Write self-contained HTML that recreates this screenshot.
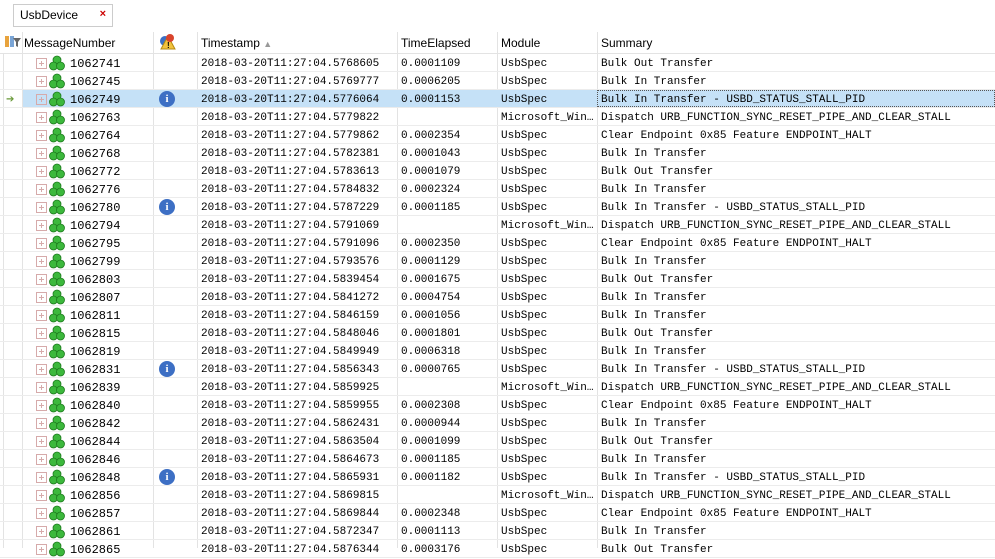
<!DOCTYPE html>
<html><head><meta charset="utf-8"><style>
*{margin:0;padding:0;box-sizing:border-box}
body{width:995px;height:548px;overflow:hidden;background:#fff;position:relative;font-family:"Liberation Sans",sans-serif}
.tab{position:absolute;left:13px;top:4px;width:100px;height:23px;border:1px solid #ccc;font-size:12px;line-height:21px;padding-left:6px;color:#000}
.tab b{position:absolute;right:6px;top:-1px;color:#c00;font-size:11px}
.hdr{position:absolute;top:32px;left:0;width:995px;height:22px;border-bottom:1px solid #e3e3e3;font-size:12px}
.hdr span{position:absolute;top:4px}
.vl{position:absolute;top:32px;bottom:0;width:1px;background:#e3e3e3}
.r{position:absolute;left:0;width:995px;height:18px;border-bottom:1px solid #ececec;font-family:"Liberation Mono",monospace;font-size:11px;line-height:17px}
.r span{position:absolute;top:2px;white-space:nowrap}
.pb{position:absolute;left:36px;top:4px;width:11px;height:11px;border:1px solid #d6aaaa;}
.pb:before{content:"";position:absolute;left:2px;top:4px;width:5px;height:1px;background:#d6aaaa}
.pb:after{content:"";position:absolute;left:4px;top:2px;width:1px;height:5px;background:#d6aaaa}
.g{position:absolute;left:49px;top:1px}
.inf{position:absolute;left:159px;top:1px;width:16px;height:16px;border-radius:50%;background:#3d6fc4;color:#fff;font:bold 11px/16px "Liberation Serif",serif;text-align:center}
.n{left:70px;font-size:12px}.t{left:201px}.e{left:401px}.m{left:501px}.s{left:601px}
</style></head><body>
<div class="tab">UsbDevice<b>×</b></div>
<div class="hdr">
<svg style="position:absolute;left:5px;top:3px" width="16" height="14"><rect x="0" y="1" width="4" height="11" fill="#e8a33d"/><rect x="5" y="1" width="4" height="11" fill="#7aa5d6"/><path d="M8 3h8l-3 4v5l-2-1V7z" fill="#666"/></svg>
<span style="left:24px">MessageNumber</span>
<svg style="position:absolute;left:159px;top:1px" width="17" height="17"><circle cx="6" cy="8" r="5" fill="#3d6fc4"/><path d="M9 3L16 16H2z" fill="#f2c23c" stroke="#b58a10"/><circle cx="11" cy="5" r="4" fill="#d9442c"/><text x="8" y="15" font-size="8" font-weight="bold">!</text></svg>
<span style="left:201px">Timestamp <span style="position:static;color:#999;font-size:9px">▲</span></span>
<span style="left:401px">TimeElapsed</span>
<span style="left:501px">Module</span>
<span style="left:601px">Summary</span>
</div>
<div class="vl" style="left:3px;top:54px"></div>
<div class="vl" style="left:22px"></div>
<div class="vl" style="left:153px"></div>
<div class="vl" style="left:197px"></div>
<div class="vl" style="left:397px"></div>
<div class="vl" style="left:497px"></div>
<div class="vl" style="left:597px"></div>

<svg width="0" height="0" style="position:absolute"><defs><g id="gr"><circle cx="8" cy="5" r="4" fill="#3cb83c" stroke="#1d7a1d" stroke-width=".8"/><circle cx="4.5" cy="11" r="4" fill="#3cb83c" stroke="#1d7a1d" stroke-width=".8"/><circle cx="11.5" cy="11" r="4" fill="#3cb83c" stroke="#1d7a1d" stroke-width=".8"/></g></defs></svg>

<div class="r" style="top:54px"><div class="pb"></div><svg class="g" width="17" height="17"><use href="#gr"/></svg><span class="n">1062741</span><span class="t">2018-03-20T11:27:04.5768605</span><span class="e">0.0001109</span><span class="m">UsbSpec</span><span class="s">Bulk Out Transfer</span></div>
<div class="r" style="top:72px"><div class="pb"></div><svg class="g" width="17" height="17"><use href="#gr"/></svg><span class="n">1062745</span><span class="t">2018-03-20T11:27:04.5769777</span><span class="e">0.0006205</span><span class="m">UsbSpec</span><span class="s">Bulk In Transfer</span></div>
<div class="r" style="top:90px"><div style="position:absolute;left:23px;width:972px;height:17px;background:#c5e1f7"></div><span style="left:6px;color:#6a9a3a;font-size:10px">➔</span><div style="position:absolute;left:597px;top:0;width:398px;height:17px;border:1px dotted #555"></div><div class="pb"></div><svg class="g" width="17" height="17"><use href="#gr"/></svg><span class="n">1062749</span><div class="inf">i</div><span class="t">2018-03-20T11:27:04.5776064</span><span class="e">0.0001153</span><span class="m">UsbSpec</span><span class="s">Bulk In Transfer - USBD_STATUS_STALL_PID</span></div>
<div class="r" style="top:108px"><div class="pb"></div><svg class="g" width="17" height="17"><use href="#gr"/></svg><span class="n">1062763</span><span class="t">2018-03-20T11:27:04.5779822</span><span class="m">Microsoft_Win…</span><span class="s">Dispatch URB_FUNCTION_SYNC_RESET_PIPE_AND_CLEAR_STALL</span></div>
<div class="r" style="top:126px"><div class="pb"></div><svg class="g" width="17" height="17"><use href="#gr"/></svg><span class="n">1062764</span><span class="t">2018-03-20T11:27:04.5779862</span><span class="e">0.0002354</span><span class="m">UsbSpec</span><span class="s">Clear Endpoint 0x85 Feature ENDPOINT_HALT</span></div>
<div class="r" style="top:144px"><div class="pb"></div><svg class="g" width="17" height="17"><use href="#gr"/></svg><span class="n">1062768</span><span class="t">2018-03-20T11:27:04.5782381</span><span class="e">0.0001043</span><span class="m">UsbSpec</span><span class="s">Bulk In Transfer</span></div>
<div class="r" style="top:162px"><div class="pb"></div><svg class="g" width="17" height="17"><use href="#gr"/></svg><span class="n">1062772</span><span class="t">2018-03-20T11:27:04.5783613</span><span class="e">0.0001079</span><span class="m">UsbSpec</span><span class="s">Bulk Out Transfer</span></div>
<div class="r" style="top:180px"><div class="pb"></div><svg class="g" width="17" height="17"><use href="#gr"/></svg><span class="n">1062776</span><span class="t">2018-03-20T11:27:04.5784832</span><span class="e">0.0002324</span><span class="m">UsbSpec</span><span class="s">Bulk In Transfer</span></div>
<div class="r" style="top:198px"><div class="pb"></div><svg class="g" width="17" height="17"><use href="#gr"/></svg><span class="n">1062780</span><div class="inf">i</div><span class="t">2018-03-20T11:27:04.5787229</span><span class="e">0.0001185</span><span class="m">UsbSpec</span><span class="s">Bulk In Transfer - USBD_STATUS_STALL_PID</span></div>
<div class="r" style="top:216px"><div class="pb"></div><svg class="g" width="17" height="17"><use href="#gr"/></svg><span class="n">1062794</span><span class="t">2018-03-20T11:27:04.5791069</span><span class="m">Microsoft_Win…</span><span class="s">Dispatch URB_FUNCTION_SYNC_RESET_PIPE_AND_CLEAR_STALL</span></div>
<div class="r" style="top:234px"><div class="pb"></div><svg class="g" width="17" height="17"><use href="#gr"/></svg><span class="n">1062795</span><span class="t">2018-03-20T11:27:04.5791096</span><span class="e">0.0002350</span><span class="m">UsbSpec</span><span class="s">Clear Endpoint 0x85 Feature ENDPOINT_HALT</span></div>
<div class="r" style="top:252px"><div class="pb"></div><svg class="g" width="17" height="17"><use href="#gr"/></svg><span class="n">1062799</span><span class="t">2018-03-20T11:27:04.5793576</span><span class="e">0.0001129</span><span class="m">UsbSpec</span><span class="s">Bulk In Transfer</span></div>
<div class="r" style="top:270px"><div class="pb"></div><svg class="g" width="17" height="17"><use href="#gr"/></svg><span class="n">1062803</span><span class="t">2018-03-20T11:27:04.5839454</span><span class="e">0.0001675</span><span class="m">UsbSpec</span><span class="s">Bulk Out Transfer</span></div>
<div class="r" style="top:288px"><div class="pb"></div><svg class="g" width="17" height="17"><use href="#gr"/></svg><span class="n">1062807</span><span class="t">2018-03-20T11:27:04.5841272</span><span class="e">0.0004754</span><span class="m">UsbSpec</span><span class="s">Bulk In Transfer</span></div>
<div class="r" style="top:306px"><div class="pb"></div><svg class="g" width="17" height="17"><use href="#gr"/></svg><span class="n">1062811</span><span class="t">2018-03-20T11:27:04.5846159</span><span class="e">0.0001056</span><span class="m">UsbSpec</span><span class="s">Bulk In Transfer</span></div>
<div class="r" style="top:324px"><div class="pb"></div><svg class="g" width="17" height="17"><use href="#gr"/></svg><span class="n">1062815</span><span class="t">2018-03-20T11:27:04.5848046</span><span class="e">0.0001801</span><span class="m">UsbSpec</span><span class="s">Bulk Out Transfer</span></div>
<div class="r" style="top:342px"><div class="pb"></div><svg class="g" width="17" height="17"><use href="#gr"/></svg><span class="n">1062819</span><span class="t">2018-03-20T11:27:04.5849949</span><span class="e">0.0006318</span><span class="m">UsbSpec</span><span class="s">Bulk In Transfer</span></div>
<div class="r" style="top:360px"><div class="pb"></div><svg class="g" width="17" height="17"><use href="#gr"/></svg><span class="n">1062831</span><div class="inf">i</div><span class="t">2018-03-20T11:27:04.5856343</span><span class="e">0.0000765</span><span class="m">UsbSpec</span><span class="s">Bulk In Transfer - USBD_STATUS_STALL_PID</span></div>
<div class="r" style="top:378px"><div class="pb"></div><svg class="g" width="17" height="17"><use href="#gr"/></svg><span class="n">1062839</span><span class="t">2018-03-20T11:27:04.5859925</span><span class="m">Microsoft_Win…</span><span class="s">Dispatch URB_FUNCTION_SYNC_RESET_PIPE_AND_CLEAR_STALL</span></div>
<div class="r" style="top:396px"><div class="pb"></div><svg class="g" width="17" height="17"><use href="#gr"/></svg><span class="n">1062840</span><span class="t">2018-03-20T11:27:04.5859955</span><span class="e">0.0002308</span><span class="m">UsbSpec</span><span class="s">Clear Endpoint 0x85 Feature ENDPOINT_HALT</span></div>
<div class="r" style="top:414px"><div class="pb"></div><svg class="g" width="17" height="17"><use href="#gr"/></svg><span class="n">1062842</span><span class="t">2018-03-20T11:27:04.5862431</span><span class="e">0.0000944</span><span class="m">UsbSpec</span><span class="s">Bulk In Transfer</span></div>
<div class="r" style="top:432px"><div class="pb"></div><svg class="g" width="17" height="17"><use href="#gr"/></svg><span class="n">1062844</span><span class="t">2018-03-20T11:27:04.5863504</span><span class="e">0.0001099</span><span class="m">UsbSpec</span><span class="s">Bulk Out Transfer</span></div>
<div class="r" style="top:450px"><div class="pb"></div><svg class="g" width="17" height="17"><use href="#gr"/></svg><span class="n">1062846</span><span class="t">2018-03-20T11:27:04.5864673</span><span class="e">0.0001185</span><span class="m">UsbSpec</span><span class="s">Bulk In Transfer</span></div>
<div class="r" style="top:468px"><div class="pb"></div><svg class="g" width="17" height="17"><use href="#gr"/></svg><span class="n">1062848</span><div class="inf">i</div><span class="t">2018-03-20T11:27:04.5865931</span><span class="e">0.0001182</span><span class="m">UsbSpec</span><span class="s">Bulk In Transfer - USBD_STATUS_STALL_PID</span></div>
<div class="r" style="top:486px"><div class="pb"></div><svg class="g" width="17" height="17"><use href="#gr"/></svg><span class="n">1062856</span><span class="t">2018-03-20T11:27:04.5869815</span><span class="m">Microsoft_Win…</span><span class="s">Dispatch URB_FUNCTION_SYNC_RESET_PIPE_AND_CLEAR_STALL</span></div>
<div class="r" style="top:504px"><div class="pb"></div><svg class="g" width="17" height="17"><use href="#gr"/></svg><span class="n">1062857</span><span class="t">2018-03-20T11:27:04.5869844</span><span class="e">0.0002348</span><span class="m">UsbSpec</span><span class="s">Clear Endpoint 0x85 Feature ENDPOINT_HALT</span></div>
<div class="r" style="top:522px"><div class="pb"></div><svg class="g" width="17" height="17"><use href="#gr"/></svg><span class="n">1062861</span><span class="t">2018-03-20T11:27:04.5872347</span><span class="e">0.0001113</span><span class="m">UsbSpec</span><span class="s">Bulk In Transfer</span></div>
<div class="r" style="top:540px"><div class="pb"></div><svg class="g" width="17" height="17"><use href="#gr"/></svg><span class="n">1062865</span><span class="t">2018-03-20T11:27:04.5876344</span><span class="e">0.0003176</span><span class="m">UsbSpec</span><span class="s">Bulk Out Transfer</span></div>
</body></html>
